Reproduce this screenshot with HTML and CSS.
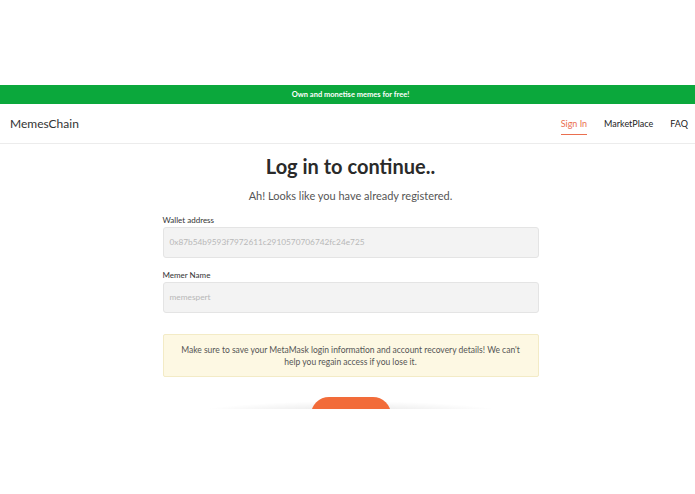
FILE: index.html
```html
<!DOCTYPE html>
<html lang="en">
<head>
    <meta charset="UTF-8">
    <meta name="viewport" content="width=device-width, initial-scale=1.0">
    <title>MemesChain - Log in</title>
    <link rel="stylesheet" href="styles.css">
</head>
<body>
    <div class="shot">
        <!-- promo strip -->
        <div class="promo">Own and monetise memes for free!</div>

        <!-- header -->
        <header class="nav">
            <div class="brand">MemesChain</div>
            <nav class="nav-links">
                <a class="nav-link active" href="#">Sign In</a>
                <a class="nav-link" href="#">MarketPlace</a>
                <a class="nav-link" href="#">FAQ</a>
            </nav>
        </header>

        <!-- login form -->
        <main class="login">
            <h1 class="login-title">Log in to continue..</h1>
            <p class="login-sub">Ah! Looks like you have already registered.</p>

            <div class="field">
                <label class="field-label">Wallet address</label>
                <div class="field-input">0x87b54b9593f7972611c2910570706742fc24e725</div>
            </div>

            <div class="field">
                <label class="field-label">Memer Name</label>
                <div class="field-input">memespert</div>
            </div>

            <div class="notice">
                Make sure to save your MetaMask login information and account recovery details! We can't help you regain access if you lose it.
            </div>

            <div class="actions">
                <button class="btn-login" aria-label="Log in"></button>
            </div>
        </main>
    </div>
</body>
</html>
```

FILE: styles.css
```css
* {
    margin: 0;
    padding: 0;
    box-sizing: border-box;
}

body {
    font-family: 'Lato', 'Open Sans', sans-serif;
    background: #fff;
    color: #333;
    padding-top: 85px;
}

/* cropped screenshot area */
.shot {
    height: 324px;
    overflow: hidden;
}

.promo {
    height: 19px;
    background: #0ba83c;
    color: #fff;
    font-size: 7.5px;
    font-weight: 700;
    line-height: 19px;
    text-align: center;
    padding-left: 6px;
}

/* header */
.nav {
    height: 40px;
    display: flex;
    align-items: center;
    justify-content: space-between;
    padding: 0 7px 0 10px;
    border-bottom: 1px solid #ececec;
}

.brand {
    font-size: 12px;
    color: #333;
}

.nav-links {
    display: flex;
    align-items: center;
    gap: 17px;
}

.nav-link {
    font-size: 9px;
    line-height: 12px;
    color: #222;
    text-decoration: none;
    padding: 5px 0 4px;
    border-bottom: 1.5px solid transparent;
}

.nav-link.active {
    color: #ea6f4f;
    border-bottom-color: #ea6f4f;
}

/* form */
.login {
    width: 376px;
    margin: 0 auto;
    position: relative;
    left: 3px;
    padding-top: 10px;
}

.login-title {
    text-align: center;
    font-size: 20px;
    font-weight: 700;
    line-height: 24px;
    color: #2a2a2a;
}

.login-sub {
    text-align: center;
    font-size: 11px;
    line-height: 16px;
    color: #555;
    margin-top: 10px;
}

.field {
    margin-top: 11px;
}

.field + .field {
    margin-top: 12px;
}

.field-label {
    display: block;
    font-size: 8px;
    line-height: 10px;
    color: #333;
    margin-bottom: 2px;
}

.field-input {
    height: 31px;
    background: #f3f3f3;
    border: 1px solid #e4e4e4;
    border-radius: 3px;
    font-size: 8.3px;
    line-height: 29px;
    color: #b8b8b8;
    padding: 0 6px;
}

.notice {
    margin-top: 21px;
    height: 43px;
    background: #fdf8e3;
    border: 1px solid #f3ebc6;
    border-radius: 2px;
    font-size: 8.5px;
    line-height: 12px;
    color: #555;
    text-align: center;
    padding: 9px 12px;
}

.actions {
    margin-top: 18px;
    height: 50px;
    display: flex;
    justify-content: center;
    background: radial-gradient(ellipse 170px 16px at 50% 22px, rgba(0, 0, 0, 0.14), rgba(0, 0, 0, 0));
}

.btn-login {
    width: 80px;
    height: 36px;
    margin-top: 2px;
    border: none;
    border-radius: 18px;
    background: #f26c3a;
}
```
